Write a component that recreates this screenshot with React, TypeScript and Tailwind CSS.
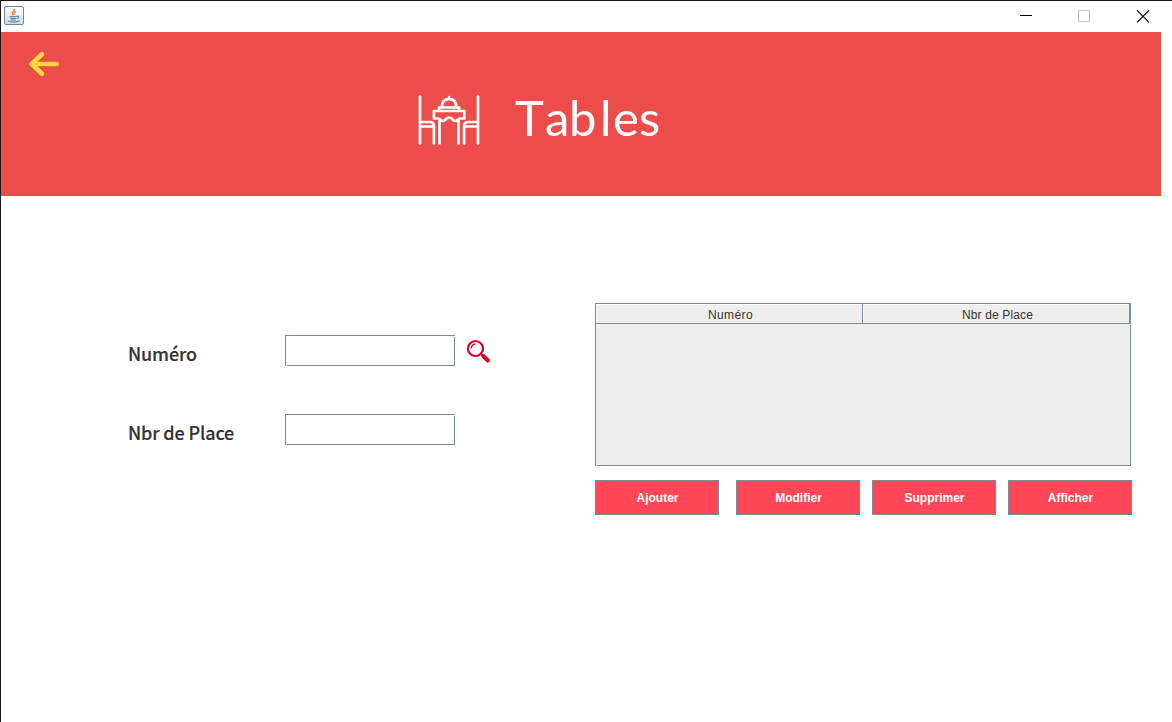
import React from "react";

function JavaIcon() {
  return (
    <svg width="20" height="20" viewBox="0 0 20 20" fill="none">
      <defs>
        <linearGradient id="tile" x1="0" y1="0" x2="0" y2="1">
          <stop offset="0" stopColor="#ffffff" />
          <stop offset="1" stopColor="#cfdbe2" />
        </linearGradient>
      </defs>
      <rect x=".5" y=".5" width="19" height="18" rx="1.5" fill="url(#tile)" stroke="#71899a" />
      <path d="M10.500 3c.8 2-3.200 2.600-2 4.800.3.700.8 1 .8 1.700M12 5.500c-1.800.8-2.400 1.600-1.300 3" stroke="#ef8b3b" strokeWidth="1.500" />
      <path d="M5.500 10.500h7M6 12.300h6M7 14h4.500M12.500 10.300c3-.8 2.600 1.900.2 2.400M4 15c2 1.300 9 1.300 11.500-.3" stroke="#5f8fac" strokeWidth="1.200" />
    </svg>
  );
}

function TitleBar() {
  return (
    <div className="flex h-[31px] shrink-0 items-start bg-white pl-[3px] pt-[5px]">
      <JavaIcon />
      <svg className="ml-[996px] mt-[4px]" width="130" height="13" viewBox="0 0 130 13" fill="none" shapeRendering="crispEdges">
        <path d="M0 5.500h12" stroke="#000" />
        <rect x="58.500" y=".5" width="11" height="11" stroke="#ccc" />
        <path d="M117 0.300l12 12M129 0.300l-12 12" stroke="#000" strokeWidth="1.100" shapeRendering="auto" />
      </svg>
    </div>
  );
}

function Header() {
  return (
    <header className="flex h-[164px] w-[1160px] shrink-0 items-start bg-[#eb4d4b]">
      <svg className="ml-[27px] mt-[19px] shrink-0" width="32" height="27" viewBox="0 0 32 27" fill="none" stroke="#ffd83d" strokeWidth="4.600" strokeLinecap="round" strokeLinejoin="round">
        <path d="M14 3.300L3.500 13 14 22.700" />
        <path d="M4 13h25" strokeLinecap="butt" strokeWidth="4.400" />
        <path d="M28 13h1" strokeWidth="4" />
      </svg>
      <svg className="ml-[358px] mt-[62px] shrink-0" width="63" height="52" viewBox="0 0 63 52" fill="none" stroke="#fff" strokeWidth="2.700" strokeLinecap="round" strokeLinejoin="round">
        <path d="M2 2.500v47M2 28H11.600q4.300 0 4.300 4v17.500M2 32.500H15" />
        <path d="M60 2.500v47M60 28H50.600q-4.500 0-4.500 4v17.500M60 32.500H48" />
        <path d="M21.500 27v22.500M40.500 27v22.500" />
        <path d="M15.900 17h30.400v7.500h-4.500c-2.500 0-2 2.800-4.500 2.500-3-.3-3-3.500-6.200-3.500s-3.200 3.200-6.200 3.500c-2.500.3-2-2.500-4.500-2.500h-4.500zM21.100 16v-2.500h20V16M23.900 13q0-7.800 7.200-7.800t7.200 7.800M31.100 5V3.200" />
      </svg>
      <h1 className="ml-[34px] mt-[56px] flex font-['Lato',sans-serif] text-[49px] font-normal leading-[58px] text-white">
        <span className="w-[30px]">T</span>
        <span className="w-[24px]">a</span>
        <span className="w-[31px]">b</span>
        <span className="w-[13px]">l</span>
        <span className="w-[26px]">e</span>
        <span>s</span>
      </h1>
    </header>
  );
}

function Field({ label, search = false }: { label: string; search?: boolean }) {
  return (
    <div className="flex h-[31px] items-start">
      <label className="w-[157px] whitespace-nowrap pt-[5px] font-['Noto_Sans_CJK_SC',sans-serif] text-[18px] font-medium leading-[26px] tracking-[-0.15px] text-[#333] [-webkit-text-stroke:0.15px_#333]">{label}</label>
      <div className="relative h-[31px] w-[170px] border border-[#7a8a99]">
        <input aria-label={label} className="block h-full w-full bg-white px-1 outline-none" />
        <span className="absolute -right-px top-0 h-px w-px bg-white" />
        <span className="absolute -bottom-px left-0 h-px w-px bg-white" />
      </div>
      {search && (
        <svg className="ml-[11px] mt-[4px]" width="25" height="25" viewBox="0 0 25 25" fill="none" stroke="#d80027">
          <circle cx="9.500" cy="9.500" r="7.500" strokeWidth="2.200" />
          <path d="M5.300 9.500q0-4 4.200-4.600" strokeWidth="1.400" />
          <path d="M15 15l2 2" strokeWidth="1.700" />
          <path d="M17.500 17.200l4.400 4.200" strokeWidth="4.200" strokeLinecap="round" />
        </svg>
      )}
    </div>
  );
}

function DataTable() {
  return (
    <div className="relative h-[163px] w-[536px] border border-[#7a8a99] bg-[#eee]">
      <div className="flex h-[20px] font-['Liberation_Sans',sans-serif] text-[12px] leading-[20px] text-[#333]">
        <div className="w-[267px] border-b border-r border-[#7a8a99]">
          <div className="h-[19px] border-l border-t border-white pl-[2px] text-center tracking-[0.4px]">Numéro</div>
        </div>
        <div className="w-[267px] border-b border-r border-[#7a8a99]">
          <div className="h-[19px] border-l border-t border-white pl-[2px] text-center tracking-[0.15px]">Nbr de Place</div>
        </div>
      </div>
      <span className="absolute -right-px top-[20px] h-px w-px bg-white" />
      <span className="absolute -bottom-px left-0 h-px w-px bg-white" />
    </div>
  );
}

function ActionButton({ children }: { children: React.ReactNode }) {
  return (
    <button className="h-[35px] w-[124px] border border-[#7a8a99] bg-[#ff4757] pl-px pt-[2px] font-['Liberation_Sans',sans-serif] text-[12px] font-bold leading-[31px] text-white">
      {children}
    </button>
  );
}

export default function App() {
  return (
    <div className="flex h-[722px] w-[1172px] flex-col overflow-hidden border-l border-t border-[#1a181b] bg-white">
      <TitleBar />
      <Header />
      <main className="flex items-start pl-[127px] pt-[107px]">
        <form className="flex w-[467px] flex-col gap-[48px] pt-[32px]">
          <Field label="Numéro" search />
          <Field label="Nbr de Place" />
        </form>
        <section>
          <DataTable />
          <div className="mt-[14px] flex">
            <ActionButton>Ajouter</ActionButton>
            <div className="ml-[17px] flex gap-[12px]">
              <ActionButton>Modifier</ActionButton>
              <ActionButton>Supprimer</ActionButton>
              <ActionButton>Afficher</ActionButton>
            </div>
          </div>
        </section>
      </main>
    </div>
  );
}
